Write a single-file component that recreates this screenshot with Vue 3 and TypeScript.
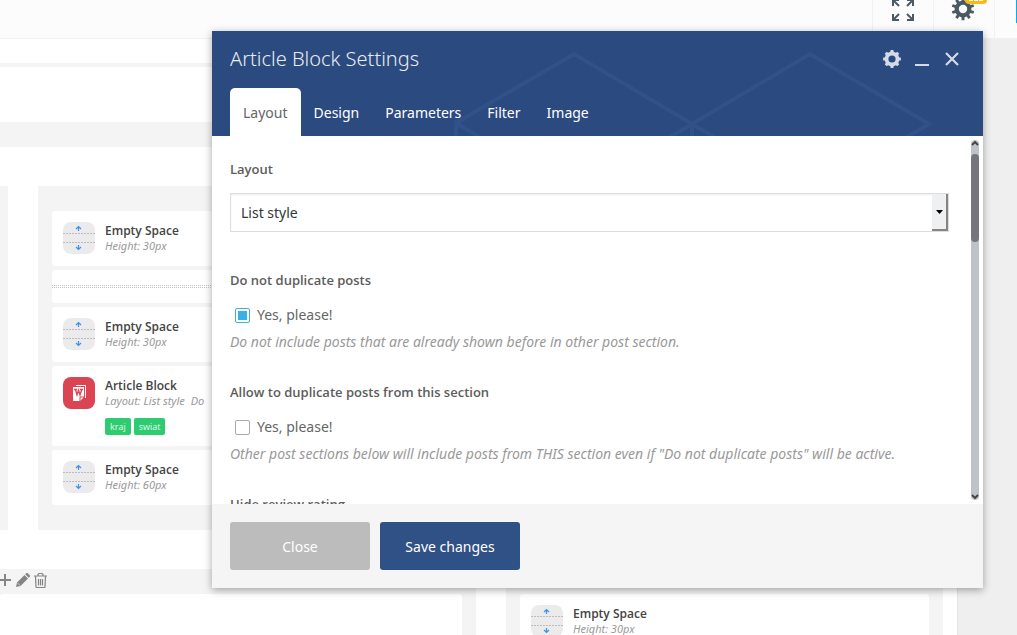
<script setup lang="ts">
import { ref } from 'vue'

interface Block {
  kind: 'space' | 'divider' | 'article'
  title?: string
  meta?: string[]
  tags?: string[]
}

interface Option {
  id: string
  label: string
  help: string
  checked: boolean
}

const blocks: Block[] = [
  { kind: 'space', title: 'Empty Space', meta: ['Height: 30px'] },
  { kind: 'divider' },
  { kind: 'space', title: 'Empty Space', meta: ['Height: 30px'] },
  { kind: 'article', title: 'Article Block', meta: ['Layout: List style', 'Do'], tags: ['kraj', 'swiat'] },
  { kind: 'space', title: 'Empty Space', meta: ['Height: 60px'] },
]

const lowerBlocks: Block[] = [{ kind: 'space', title: 'Empty Space', meta: ['Height: 30px'] }]

const tabs = ['Layout', 'Design', 'Parameters', 'Filter', 'Image']
const activeTab = ref('Layout')
const layout = ref('List style')

const options = ref<Option[]>([
  {
    id: 'no-duplicate',
    label: 'Do not duplicate posts',
    help: 'Do not include posts that are already shown before in other post section.',
    checked: true,
  },
  {
    id: 'allow-duplicate',
    label: 'Allow to duplicate posts from this section',
    help: 'Other post sections below will include posts from THIS section even if "Do not duplicate posts" will be active.',
    checked: false,
  },
])

function gearPath(c: number, teeth: number, outer: number, inner: number, hole: number): string {
  const step = (Math.PI * 2) / teeth
  const at = (r: number, a: number) => `${(c + r * Math.sin(a)).toFixed(2)} ${(c - r * Math.cos(a)).toFixed(2)}`
  const points: string[] = []
  for (let i = 0; i < teeth; i++) {
    const a = i * step
    points.push(at(inner, a - step * 0.28), at(outer, a - step * 0.2), at(outer, a + step * 0.2), at(inner, a + step * 0.28))
  }
  return `M${points.join('L')}ZM${c - hole} ${c}a${hole} ${hole} 0 1 0 ${hole * 2} 0a${hole} ${hole} 0 1 0 ${-hole * 2} 0Z`
}

const toolbarGear = gearPath(12, 10, 11.4, 8.4, 4.2)
const headerGear = gearPath(9, 8, 9, 7.4, 3.6)
</script>

<template>
  <div class="page">
    <header class="topbar">
      <button class="tool" type="button" aria-label="Full screen">
        <svg class="expand" width="22" height="22" viewBox="0 0 22 22">
          <g fill="none" stroke="#4b5963" stroke-width="2">
            <path d="M1 7V1H7M1 1L7 7" />
            <path d="M15 1H21V7M21 1L15 7" />
            <path d="M1 15V21H7M1 21L7 15" />
            <path d="M15 21H21V15M21 21L15 15" />
          </g>
        </svg>
      </button>
      <button class="tool" type="button" aria-label="Settings">
        <svg class="cog" width="24" height="24" viewBox="0 0 24 24">
          <path :d="toolbarGear" fill="#4b5963" fill-rule="evenodd" />
        </svg>
        <span class="badge"></span>
      </button>
      <div class="tool-end"></div>
    </header>

    <main class="canvas">
      <div class="strip"></div>
      <div class="strip wide"></div>

      <section class="row upper">
        <div class="column"></div>
        <div class="column padded">
          <article v-for="(b, i) in blocks" :key="i" class="card" :class="b.kind">
            <div v-if="b.kind === 'divider'" class="dots"></div>
            <template v-else>
              <svg v-if="b.kind === 'space'" class="icon" width="32" height="32" viewBox="0 0 32 32">
                <rect width="32" height="32" rx="8" fill="#ebebeb" />
                <path d="M0 11.5H32M0 20.5H32" stroke="#bcbcbc" stroke-dasharray="2 1" />
                <path d="M15.5 9V4.500M13 7L15.500 4.500L18 7M15.500 23V27.500M13 25L15.500 27.500L18 25" fill="none" stroke="#3b93f0" stroke-width="1.200" />
              </svg>
              <svg v-else class="icon" width="32" height="32" viewBox="0 0 32 32">
                <rect width="32" height="32" rx="8" fill="#da4453" />
                <path d="M13 8.500H22.500V21" fill="none" stroke="#fff" />
                <path d="M10 10H21V20L17 24H10Z" fill="#fff" />
                <path d="M17 24V20H21" fill="none" stroke="#da4453" />
                <path d="M11 12.500H14M17 12.500H20M12.500 12.500L14 18L15.500 13L17 18L18.800 12.500" fill="none" stroke="#da4453" stroke-width="1.300" />
              </svg>
              <div class="info">
                <h3>{{ b.title }}</h3>
                <p><span v-for="m in b.meta" :key="m">{{ m }}</span></p>
                <div v-if="b.tags" class="tags"><span v-for="t in b.tags" :key="t">{{ t }}</span></div>
              </div>
            </template>
          </article>
        </div>
      </section>

      <section class="row lower">
        <div class="column bleed">
          <div class="actions">
            <button type="button" aria-label="Add">
              <svg width="12" height="14" viewBox="0 0 12 14"><path d="M0 7H11M5 1V13" stroke="#858585" stroke-width="2" /></svg>
            </button>
            <button type="button" aria-label="Edit">
              <svg width="14" height="14" viewBox="0 0 14 14">
                <path d="M0 14L1 9.500L8.500 2L12 5.500L4.500 13ZM9.200 1.300L10.500 0H11.500L14 2.500V3.500L12.700 4.800Z" fill="#858585" />
                <path d="M1.500 10L4 12.500" stroke="#f4f4f4" stroke-width=".6" />
              </svg>
            </button>
            <button type="button" aria-label="Delete">
              <svg width="13" height="15" viewBox="0 0 13 15">
                <path d="M0 3H13M4 3V1.500L5 .5H8L9 1.500V3M1.500 3.500L2 14L2.500 14.500H10.500L11 14L11.500 3.500M4.500 6V12.500M6.500 6V12.500M8.500 6V12.500" fill="none" stroke="#858585" stroke-width="1.200" />
              </svg>
            </button>
          </div>
          <article class="card blank"></article>
        </div>
        <div class="column padded">
          <article v-for="(b, i) in lowerBlocks" :key="i" class="card space">
            <svg class="icon" width="32" height="32" viewBox="0 0 32 32">
              <rect width="32" height="32" rx="8" fill="#ebebeb" />
              <path d="M0 11.500H32M0 20.500H32" stroke="#bcbcbc" stroke-dasharray="2 1" />
              <path d="M15.500 9V4.500M13 7L15.500 4.500L18 7M15.500 23V27.500M13 25L15.500 27.500L18 25" fill="none" stroke="#3b93f0" stroke-width="1.200" />
            </svg>
            <div class="info">
              <h3>{{ b.title }}</h3>
              <p><span v-for="m in b.meta" :key="m">{{ m }}</span></p>
            </div>
          </article>
        </div>
      </section>
    </main>

    <div class="modal" role="dialog" aria-labelledby="modal-title">
      <div class="head">
        <svg class="pattern" width="771" height="105" viewBox="0 0 771 105" aria-hidden="true">
          <path
            d="M244 92L362 23L480 93L598 23L717 93L600 162M480 93L362 162L244 92V140M480 93V140M480 93L598 162"
            fill="none" stroke="#315289" stroke-width="4"
          />
        </svg>
        <div class="title-row">
          <h2 id="modal-title">Article Block Settings</h2>
          <button type="button" aria-label="Block options">
            <svg width="18" height="18" viewBox="0 0 18 18"><path :d="headerGear" fill="#d4dae6" fill-rule="evenodd" /></svg>
          </button>
          <button type="button" aria-label="Minimize">
            <svg width="14" height="18" viewBox="0 0 14 18"><path d="M0 15H14" stroke="#d4dae6" stroke-width="2" /></svg>
          </button>
          <button type="button" aria-label="Close window">
            <svg width="14" height="18" viewBox="0 0 14 18"><path d="M1 3L13 15M13 3L1 15" stroke="#d4dae6" stroke-width="2.200" /></svg>
          </button>
        </div>
        <nav class="tabs" role="tablist">
          <button
            v-for="t in tabs" :key="t" type="button" role="tab"
            :aria-selected="t === activeTab" :class="{ active: t === activeTab }" @click="activeTab = t"
          >{{ t }}</button>
        </nav>
      </div>

      <div class="body">
        <form class="fields" @submit.prevent>
          <div class="field">
            <label class="name" for="layout">Layout</label>
            <div class="select">
              <select id="layout" v-model="layout">
                <option>List style</option>
              </select>
              <span class="drop"><svg width="7" height="4" viewBox="0 0 7 4"><path d="M0 0H7L3.500 4Z" /></svg></span>
            </div>
          </div>
          <div v-for="o in options" :key="o.id" class="field option">
            <div class="name">{{ o.label }}</div>
            <div class="check">
              <input :id="o.id" v-model="o.checked" type="checkbox" />
              <label :for="o.id">Yes, please!</label>
            </div>
            <p class="help">{{ o.help }}</p>
          </div>
          <div class="field"><div class="name">Hide review rating</div></div>
        </form>
        <div class="scroll" aria-hidden="true">
          <svg width="8" height="8" viewBox="0 0 8 8"><path d="M1 5L4 2L7 5" fill="none" stroke="#3c4146" stroke-width="1.800" /></svg>
          <div class="thumb"></div>
          <svg width="8" height="8" viewBox="0 0 8 8"><path d="M1 3L4 6L7 3" fill="none" stroke="#3c4146" stroke-width="1.800" /></svg>
        </div>
      </div>

      <footer class="foot">
        <button class="close" type="button">Close</button>
        <button class="save" type="button">Save changes</button>
      </footer>
    </div>
  </div>
</template>

<style>
body {
  margin: 0;
  background: #efefef;
}
</style>

<style scoped>
.page {
  position: relative;
  display: flex;
  flex-direction: column;
  height: 100vh;
  overflow: hidden;
  background: #efefef;
  font-family: "Noto Sans", "Open Sans", sans-serif;
}
.page *,
.page *::before {
  box-sizing: border-box;
}
h2,
h3,
p {
  margin: 0;
}
button {
  padding: 0;
  border: 0;
  background: none;
  font-family: inherit;
  cursor: pointer;
}
svg {
  display: block;
}

.topbar {
  display: flex;
  flex: none;
  justify-content: flex-end;
  height: 39px;
  background: #fcfcfc;
  border-bottom: 1px solid #f1f1f1;
}
.tool {
  position: relative;
  width: 61px;
  border-left: 1px solid #f1f1f1;
}
.expand {
  position: absolute;
  top: -1px;
  left: 19px;
}
.cog {
  position: absolute;
  top: -3px;
  left: 17px;
}
.badge {
  position: absolute;
  top: -12px;
  left: 31px;
  width: 22px;
  height: 16px;
  border-radius: 4px;
  background: repeating-linear-gradient(90deg, #fff 0 4px, #fdb813 4px 5px) 4px 11px / 14px 2px no-repeat #fdb813;
}
.tool-end {
  width: 23px;
  border-left: 1px solid #f1f1f1;
  background: linear-gradient(#00aeef, #00aeef) right top / 1px 23px no-repeat;
}

.canvas {
  flex: 1;
  margin-right: 59px;
  padding-top: 24px;
  background: #fff;
  border-right: 1px solid #e3e3e3;
}
.strip {
  height: 4px;
  margin-bottom: 55px;
  background: #f4f4f4;
}
.strip.wide {
  height: 25px;
  margin-bottom: 39px;
}
.row {
  display: grid;
  gap: 30px;
  margin-right: 14px;
}
.upper {
  grid-template-columns: 8px 1fr;
  margin-bottom: 39px;
}
.lower {
  grid-template-columns: 476fr 437fr;
}
.column {
  background: #f4f4f4;
}
.padded {
  display: flex;
  flex-direction: column;
  gap: 4px;
  padding: 25px 14px;
}
.bleed {
  padding-right: 14px;
}
.actions {
  display: flex;
  align-items: center;
  gap: 4px;
  height: 25px;
  padding-bottom: 3px;
}
.card {
  display: flex;
  gap: 10px;
  padding: 11px;
  border-radius: 3px;
  background: #fff;
}
.card.divider {
  padding: 14px 0;
}
.card.blank {
  height: 120px;
}
.dots {
  width: 100%;
  height: 5px;
  background: repeating-conic-gradient(#c4c4c4 0 25%, #fff 0 100%) -1px 1px / 2px 2px;
}
.icon {
  flex: none;
}
.info {
  white-space: nowrap;
}
h3 {
  color: #444;
  font-family: "Open Sans", "Noto Sans", sans-serif;
  font-size: 12px;
  font-weight: 600;
  line-height: 17px;
}
.info p {
  display: flex;
  gap: 6px;
  color: #999;
  font-size: 11px;
  font-style: italic;
  line-height: 14px;
}
.card.space .info {
  height: 33px;
}
.tags {
  display: flex;
  gap: 3px;
  margin-top: 10px;
}
.tags span {
  padding: 0 5px;
  border-radius: 2px;
  background: #2ecc71;
  color: #e4fbed;
  font-family: "Open Sans", "Noto Sans", sans-serif;
  font-size: 9px;
  line-height: 17px;
}

.modal {
  position: absolute;
  top: 31px;
  right: 34px;
  bottom: 47px;
  left: 212px;
  display: flex;
  flex-direction: column;
  background: #fff;
  box-shadow: 0 2px 8px rgba(0, 0, 0, 0.35);
}
.head {
  position: relative;
  flex: none;
  padding: 0 18px;
  overflow: hidden;
  background: #2b4a7f;
}
.pattern {
  position: absolute;
  top: 0;
  left: 0;
}
.title-row {
  position: relative;
  display: flex;
  align-items: center;
  gap: 14px;
  height: 57px;
  padding: 0 6px 2px 0;
}
.title-row button:nth-of-type(3) {
  margin-left: 2px;
}
h2 {
  flex: 1;
  color: #e9edf3;
  font-size: 20px;
  font-weight: 300;
  line-height: 28px;
}
.tabs {
  position: relative;
  display: flex;
}
.tabs button {
  height: 48px;
  padding: 2px 13px 0;
  border-radius: 5px 5px 0 0;
  color: #fff;
  font-size: 14px;
  line-height: 20px;
}
.tabs .active {
  background: #fff;
  color: #666;
}
.body {
  display: flex;
  flex: 1;
  min-height: 0;
}
.fields {
  flex: 1;
  padding: 23px 22px 0 18px;
  overflow: hidden;
}
.field {
  margin-bottom: 38px;
}
.field.option {
  margin-bottom: 30px;
}
.name {
  display: block;
  margin-bottom: 14px;
  color: #5c5c5c;
  font-family: "Open Sans", "Noto Sans", sans-serif;
  font-size: 13px;
  font-weight: 600;
  line-height: 20px;
}
.select {
  position: relative;
}
select {
  display: block;
  width: 100%;
  height: 39px;
  padding: 0 10px;
  border: 1px solid #ddd;
  border-radius: 0;
  appearance: none;
  background: #fff;
  box-shadow: inset 0 1px 2px rgba(0, 0, 0, 0.07);
  color: #32373c;
  font-family: inherit;
  font-size: 14px;
}
.drop {
  position: absolute;
  top: 1px;
  right: 1px;
  bottom: 1px;
  display: grid;
  place-items: center;
  width: 16px;
  border: solid #858585;
  border-width: 0 2px 2px 0;
  background: #eff0f1;
  pointer-events: none;
}
.check {
  display: flex;
  align-items: center;
  gap: 7px;
  height: 22px;
  padding-left: 5px;
  color: #666;
  font-size: 14px;
  line-height: 22px;
}
.check input {
  display: grid;
  place-items: center;
  width: 15px;
  height: 15px;
  margin: 0;
  border: 1px solid #aaa;
  border-radius: 2px;
  appearance: none;
  background: #fff;
}
.check input:checked {
  border-color: #3bafea;
}
.check input:checked::before {
  width: 9px;
  height: 9px;
  background: #3bafea;
  content: "";
}
.help {
  margin-top: 6px;
  color: #999;
  font-size: 14px;
  font-style: italic;
  line-height: 20px;
  white-space: nowrap;
}
.scroll {
  display: flex;
  flex-direction: column;
  width: 8px;
  margin: 4px 4px 4px 0;
  border-radius: 4px;
  background: #bdc3c7;
}
.thumb {
  height: 88px;
  margin: 6px 0 auto;
  border-radius: 4px;
  background: #75767b;
}
.foot {
  display: flex;
  flex: none;
  gap: 10px;
  padding: 18px;
  background: #f5f5f5;
}
.foot button {
  width: 140px;
  height: 48px;
  border-radius: 3px;
  color: #fff;
  font-size: 14px;
}
.foot .close {
  background: #bcbcbc;
}
.foot .save {
  background: #305186;
}
</style>
